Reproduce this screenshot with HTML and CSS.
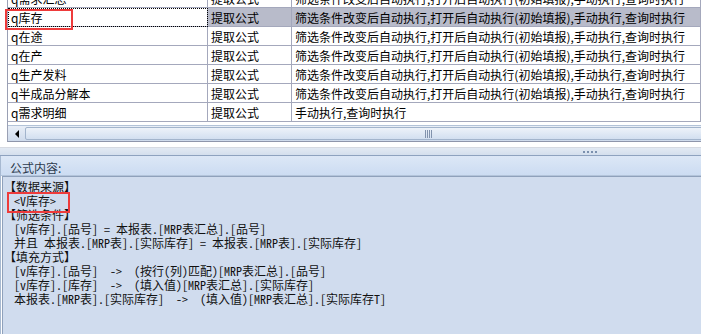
FILE: index.html
```html
<html>
<head>
  <meta charset="utf-8">
  <title>公式设置</title>
  <link rel="stylesheet" href="styles.css">
</head>
<body>
  <div class="app">
    <div class="grid">
      <div class="viewport">
        <div class="rows">
          <div class="row">
            <div class="cell name">q需求汇总</div>
            <div class="cell">提取公式</div>
            <div class="cell">筛选条件改变后自动执行,打开后自动执行(初始填报),手动执行,查询时执行</div>
          </div>
          <div class="row selected">
            <div class="cell name">q库存</div>
            <div class="cell">提取公式</div>
            <div class="cell">筛选条件改变后自动执行,打开后自动执行(初始填报),手动执行,查询时执行</div>
          </div>
          <div class="row">
            <div class="cell name">q在途</div>
            <div class="cell">提取公式</div>
            <div class="cell">筛选条件改变后自动执行,打开后自动执行(初始填报),手动执行,查询时执行</div>
          </div>
          <div class="row">
            <div class="cell name">q在产</div>
            <div class="cell">提取公式</div>
            <div class="cell">筛选条件改变后自动执行,打开后自动执行(初始填报),手动执行,查询时执行</div>
          </div>
          <div class="row">
            <div class="cell name">q生产发料</div>
            <div class="cell">提取公式</div>
            <div class="cell">筛选条件改变后自动执行,打开后自动执行(初始填报),手动执行,查询时执行</div>
          </div>
          <div class="row">
            <div class="cell name">q半成品分解本</div>
            <div class="cell">提取公式</div>
            <div class="cell">筛选条件改变后自动执行,打开后自动执行(初始填报),手动执行,查询时执行</div>
          </div>
          <div class="row">
            <div class="cell name">q需求明细</div>
            <div class="cell">提取公式</div>
            <div class="cell">手动执行,查询时执行</div>
          </div>
        </div>
      </div>

      <!-- horizontal scrollbar -->
      <div class="hscroll">
        <div class="btn"><span class="arrow-left"></span></div>
        <div class="thumb"><span class="grip"></span></div>
        <div class="track"></div>
        <div class="btn"><span class="arrow-right"></span></div>
      </div>
    </div>

    <div class="splitter"><span class="dots"></span></div>

    <div class="panel">
      <div class="panel-head">公式内容:</div>
      <div class="panel-body">
        <div class="line head">【数据来源】</div>
        <div class="line item">&lt;V库存&gt;</div>
        <div class="line head">【筛选条件】</div>
        <div class="line item">[v库存].[品号] = 本报表.[MRP表汇总].[品号]</div>
        <div class="line item">并且 本报表.[MRP表].[实际库存] = 本报表.[MRP表].[实际库存]</div>
        <div class="line head">【填充方式】</div>
        <div class="line item">[v库存].[品号]  -&gt;  (按行(列)匹配)[MRP表汇总].[品号]</div>
        <div class="line item">[v库存].[库存]  -&gt;  (填入值)[MRP表汇总].[实际库存]</div>
        <div class="line item">本报表.[MRP表].[实际库存]  -&gt;  (填入值)[MRP表汇总].[实际库存T]</div>
      </div>
    </div>

    <!-- red highlight marks -->
    <div class="mark mark-row"></div>
    <div class="mark mark-src"></div>
  </div>
</body>
</html>
```

FILE: styles.css
```css
body {
  margin: 0;
  width: 701px;
  height: 334px;
  overflow: hidden;
  background-color: #fff;
  font-family: "Noto Sans CJK SC", "Liberation Sans", sans-serif;
  font-size: 12px;
  color: #000;
}

.app {
  position: relative;
  width: 1180px;
  height: 334px;
}

/* grid */
.grid {
  margin-left: 7px;
  border-left: 1px solid #9aa0b4;
  border-bottom: 1px solid #8f96ab;
}

.viewport {
  height: 125px;
  overflow: hidden;
}

.rows {
  margin-top: -11px;
}

.row {
  display: grid;
  grid-template-columns: 200px 84px 409px;
  height: 19px;
}

.cell {
  box-sizing: border-box;
  padding-left: 3px;
  line-height: 19px;
  white-space: nowrap;
  overflow: hidden;
  border-right: 1px solid #a4a8bc;
  border-bottom: 1px solid #a4a8bc;
}

.row.selected .cell {
  background-color: #b8bbca;
}

.row.selected .cell.name {
  background-color: #fff;
  outline: 1px dotted #000;
  outline-offset: -1px;
}

.hscroll {
  display: flex;
  box-sizing: border-box;
  height: 16px;
  border-top: 1px solid #b3c3d8;
  background: linear-gradient(#e8eef7, #cfdbec);
}

.hscroll .btn {
  width: 17px;
  display: flex;
  align-items: center;
  justify-content: center;
}

.arrow-left {
  border-right: 4px solid #000;
  border-top: 4px solid transparent;
  border-bottom: 4px solid transparent;
}

.arrow-right {
  border-left: 4px solid #000;
  border-top: 4px solid transparent;
  border-bottom: 4px solid transparent;
}

.thumb {
  flex: 0 0 806px;
  box-sizing: border-box;
  margin: 1px 0;
  display: flex;
  align-items: center;
  justify-content: center;
  border: 1px solid #a2b4cc;
  border-radius: 2px;
  background: linear-gradient(#edf2f9, #d2dff0);
}

.grip {
  width: 7px;
  height: 8px;
  background: repeating-linear-gradient(90deg, #8293ad 0 1px, transparent 1px 2px);
}

.track {
  flex: 1;
}

/* splitter */
.splitter {
  box-sizing: border-box;
  height: 9px;
  margin-top: 5px;
  padding-top: 3px;
  display: flex;
  justify-content: center;
  border-top: 1px solid #d6dae2;
  border-bottom: 1px solid #8ea2bf;
  background: linear-gradient(#e2e9f3, #d4dfed);
}

.dots {
  width: 14px;
  height: 2px;
  background: repeating-linear-gradient(90deg, #7b90ae 0 2px, transparent 2px 4px);
}

/* formula panel */
.panel {
  border-left: 1px solid #a7b9d1;
}

.panel-head {
  height: 17px;
  padding-top: 2px;
  line-height: 20px;
  padding-left: 9px;
  color: #2c3a4d;
  border-bottom: 1px solid #b3c4da;
  background: linear-gradient(#dce7f6, #ccdcf2);
}

.panel-body {
  height: 158px;
  margin-left: 1px;
  padding-top: 3px;
  border-left: 1px solid #8fa1bb;
  border-top: 1px solid #8fa1bb;
  background-color: #d0dcee;
  color: #111;
  font-family: "Noto Sans Mono CJK SC", "Noto Sans CJK SC", monospace;
}

.line {
  height: 14px;
  line-height: 14px;
  white-space: pre;
}

.line.head {
  padding-left: 1px;
}

.line.item {
  padding-left: 11px;
}

/* annotations */
.mark {
  position: absolute;
  box-sizing: border-box;
  border: 2px solid #ee3b3b;
}

.mark-row {
  left: 5px;
  top: 9px;
  width: 68px;
  height: 21px;
}

.mark-src {
  left: 7px;
  top: 192px;
  width: 63px;
  height: 21px;
}
```
